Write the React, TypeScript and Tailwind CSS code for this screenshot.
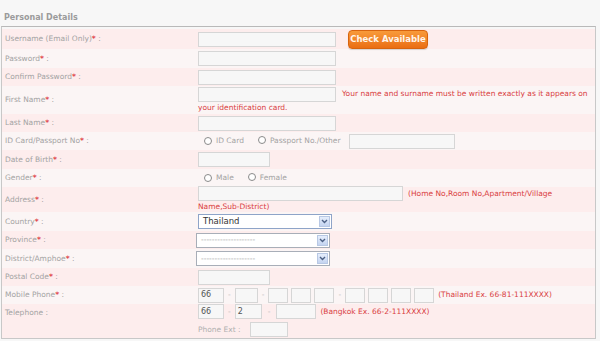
import React from "react";

const font = { fontFamily: '"DejaVu Sans", Verdana, sans-serif' };

function Label({ text, req = true }: { text: string; req?: boolean }) {
  return (
    <span className="text-[#a3a3a3]">
      {text}
      {req && <span className="text-[#e0454b] font-bold">*</span>} :
    </span>
  );
}

function Box({ w, value }: { w: string; value?: string }) {
  return (
    <span
      className={`inline-flex h-[15px] items-center border border-[#d6d6d6] bg-[#f7f7f7] px-[2px] align-middle text-[8px] text-[#555] ${w}`}
    >
      {value}
    </span>
  );
}

function Radio({ label }: { label: string }) {
  return (
    <span className="inline-flex items-center gap-[4px]">
      <span className="h-[8px] w-[8px] rounded-full border border-[#8a8a8a] bg-white" />
      <span className="text-[#a3a3a3]">{label}</span>
    </span>
  );
}

function Select({ value, dark }: { value: string; dark?: boolean }) {
  return (
    <span
      className={`inline-flex h-[15px] w-[134px] items-center justify-between border bg-white pl-[4px] pr-[1px] align-middle ${
        dark ? "border-[#8ea4c8]" : "border-[#a8aeb8]"
      }`}
    >
      <span className={dark ? "text-[8.5px] text-[#333]" : "text-[7.5px] text-[#a0a0a0]"}>{value}</span>
      <span className="flex h-[11px] w-[11px] items-center justify-center border border-[#b8c8e4] bg-gradient-to-b from-[#e6eefc] to-[#c4d4f0]">
        <svg width="7" height="5" viewBox="0 0 7 5">
          <path d="M1 1 L3.5 3.5 L6 1" fill="none" stroke="#4d6185" strokeWidth="1.4" />
        </svg>
      </span>
    </span>
  );
}

function Row({
  label,
  children,
  bg,
  h,
  top,
}: {
  label: React.ReactNode;
  children?: React.ReactNode;
  bg: string;
  h: string;
  top?: boolean;
}) {
  return (
    <div className={`flex ${top ? "items-start pt-[5px]" : "items-center"} ${bg} ${h}`}>
      <div className="w-[196px] shrink-0 pl-[3px]">{label}</div>
      <div className="flex-1">{children}</div>
    </div>
  );
}

const Dash = () => <span className="mx-[4px] text-[#bbb]">-</span>;

export default function App() {
  const pink = "bg-[#fdeded]";
  const light = "bg-[#fbf5f5]";
  return (
    <div className="h-[341px] w-[600px] bg-[#f7f7f7] text-[7.5px] leading-none" style={font}>
      <div className="px-[4px] pt-[14px] pb-[4px] text-[8px] font-bold text-[#9b9b9b]">Personal Details</div>
      <div className="mr-[4px] ml-[1px] border border-[#c8c8c8] border-t-[#b9b9b9] pt-[2px]">
        <Row bg={pink} h="h-[20px]" label={<Label text="Username (Email Only)" />}>
          <div className="flex items-center">
            <Box w="w-[138px]" />
            <span className="ml-[12px] flex h-[19px] w-[80px] items-center justify-center rounded-[4px] border border-[#d8640e] bg-gradient-to-b from-[#f89a3a] to-[#ea6e12] text-[8.5px] font-bold text-[#fff4ea] shadow-[0_1px_1px_rgba(0,0,0,0.15)]">
              Check Available
            </span>
          </div>
        </Row>
        <Row bg={light} h="h-[19px]" label={<Label text="Password" />}>
          <Box w="w-[138px]" />
        </Row>
        <Row bg={pink} h="h-[18px]" label={<Label text="Confirm Password" />}>
          <Box w="w-[138px]" />
        </Row>
        <Row bg={light} h="h-[28px]" label={<Label text="First Name" />}>
          <div className="leading-[12px] text-[#d9403f]">
            <Box w="w-[138px]" />
            <span className="ml-[6px]">Your name and surname must be written exactly as it appears on</span>
            <br />
            your identification card.
          </div>
        </Row>
        <Row bg={pink} h="h-[18px]" label={<Label text="Last Name" />}>
          <Box w="w-[138px]" />
        </Row>
        <Row bg={light} h="h-[18px]" label={<Label text="ID Card/Passport No" />}>
          <div className="flex items-center pl-[6px]">
            <Radio label="ID Card" />
            <span className="ml-[14px]">
              <Radio label="Passport No./Other" />
            </span>
            <span className="ml-[8px]">
              <Box w="w-[106px]" />
            </span>
          </div>
        </Row>
        <Row bg={pink} h="h-[19px]" label={<Label text="Date of Birth" />}>
          <Box w="w-[72px]" />
        </Row>
        <Row bg={light} h="h-[18px]" label={<Label text="Gender" />}>
          <div className="flex items-center pl-[6px]">
            <Radio label="Male" />
            <span className="ml-[14px]">
              <Radio label="Female" />
            </span>
          </div>
        </Row>
        <Row bg={pink} h="h-[25px]" label={<Label text="Address" />}>
          <div className="leading-[12px] text-[#d9403f]">
            <Box w="w-[205px]" />
            <span className="ml-[5px]">(Home No,Room No,Apartment/Village</span>
            <br />
            Name,Sub-District)
          </div>
        </Row>
        <Row bg={light} h="h-[19px]" label={<Label text="Country" />}>
          <Select value="Thailand" dark />
        </Row>
        <Row bg={pink} h="h-[18px]" label={<Label text="Province" />}>
          <span className="-ml-[2px] inline-block">
            <Select value="--------------------" />
          </span>
        </Row>
        <Row bg={light} h="h-[19px]" label={<Label text="District/Amphoe" />}>
          <span className="-ml-[2px] inline-block">
            <Select value="--------------------" />
          </span>
        </Row>
        <Row bg={pink} h="h-[18px]" label={<Label text="Postal Code" />}>
          <Box w="w-[72px]" />
        </Row>
        <Row bg={light} h="h-[18px]" label={<Label text="Mobile Phone" />}>
          <div className="flex items-center">
            <Box w="w-[26px]" value="66" />
            <Dash />
            <Box w="w-[23px]" />
            <Dash />
            <span className="flex gap-[3px]">
              <Box w="w-[20px]" />
              <Box w="w-[20px]" />
              <Box w="w-[20px]" />
            </span>
            <Dash />
            <span className="flex gap-[3px]">
              <Box w="w-[20px]" />
              <Box w="w-[20px]" />
              <Box w="w-[20px]" />
              <Box w="w-[20px]" />
            </span>
            <span className="ml-[4px] text-[#d9403f]">(Thailand Ex. 66-81-111XXXX)</span>
          </div>
        </Row>
        <Row bg={pink} h="h-[34px]" top label={<Label text="Telephone" req={false} />}>
          <div className="-mt-[5px] flex flex-col gap-[3px]">
            <div className="flex items-center">
              <Box w="w-[26px]" value="66" />
              <Dash />
              <Box w="w-[27px]" value="2" />
              <span className="mx-[6px] text-[#bbb]">-</span>
              <Box w="w-[40px]" />
              <span className="ml-[4px] text-[#d9403f]">(Bangkok Ex. 66-2-111XXXX)</span>
            </div>
            <div className="flex items-center">
              <span className="w-[52px] text-[#b0b0b0]">Phone Ext :</span>
              <Box w="w-[38px]" />
            </div>
          </div>
        </Row>
      </div>
    </div>
  );
}
